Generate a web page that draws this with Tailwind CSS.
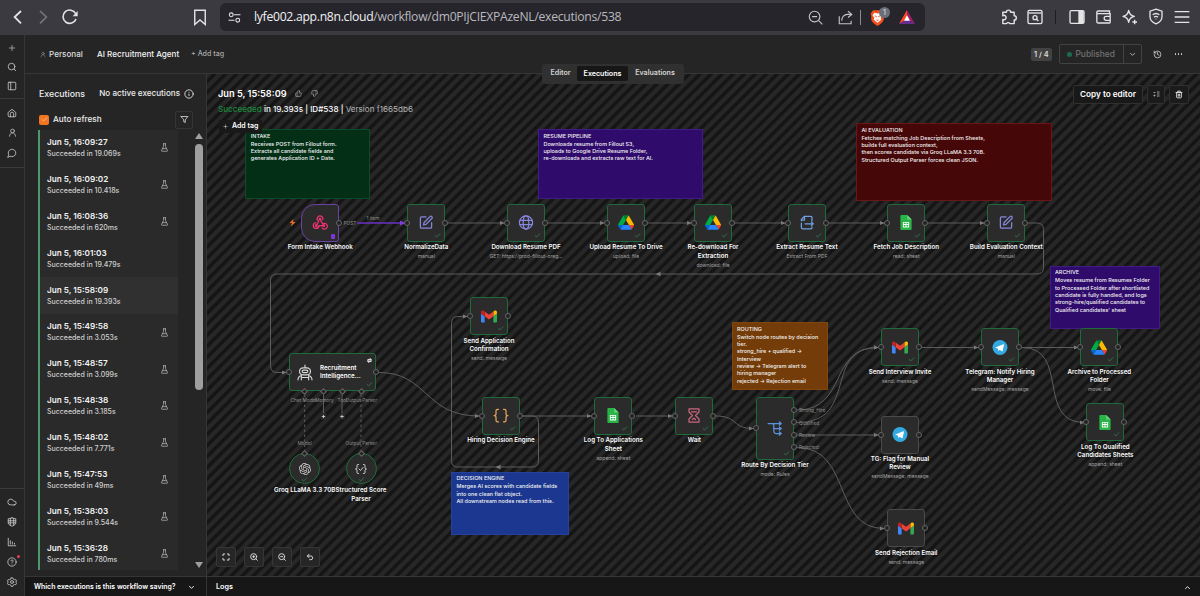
<!DOCTYPE html>
<html lang="en">
	<head>
		<meta charset="UTF-8" />
		<meta name="viewport" content="width=device-width, initial-scale=1.0" />
		<script src="https://cdn.jsdelivr.net/npm/@tailwindcss/browser@4"></script>
		<title>AI Recruitment Agent - n8n</title>
	</head>
	<body
		class="h-[596px] w-[1200px] overflow-hidden bg-[#252525] font-['Inter','Liberation_Sans',sans-serif] text-white flex flex-col [&_use]:fill-none [&_use]:stroke-current [&_use]:stroke-2 [&_use]:[stroke-linecap:round] [&_use]:[stroke-linejoin:round]"
	>
		<!-- icon sprite -->
		<svg class="hidden" xmlns="http://www.w3.org/2000/svg">
			<symbol id="plus" viewBox="0 0 24 24"><path d="M4 12h16M12 4v16" /></symbol>
			<symbol id="search" viewBox="0 0 24 24"><circle cx="11" cy="11" r="8" /><path d="m21 21-4-4" /></symbol>
			<symbol id="panel" viewBox="0 0 24 24"><rect x="3" y="3" width="18" height="18" rx="2" /><path d="M9 3v18" /></symbol>
			<symbol id="home" viewBox="0 0 24 24"><path d="M3 10.500 12 3l9 7.500V19a2 2 0 0 1-2 2H5a2 2 0 0 1-2-2zM8 21v-7a4 4 0 0 1 8 0v7" /></symbol>
			<symbol id="user" viewBox="0 0 24 24"><circle cx="12" cy="8" r="5" /><path d="M4 22c0-5 3-9 8-9s8 4 8 9" /></symbol>
			<symbol id="chat" viewBox="0 0 24 24"><path d="M7.900 20A9 9 0 1 0 4 16.100L2 22Z" /></symbol>
			<symbol id="cloud" viewBox="0 0 24 24"><path d="M17.500 19H9a7 7 0 1 1 6.700-9h1.800a4.500 4.500 0 1 1 0 9Z" /></symbol>
			<symbol id="box" viewBox="0 0 24 24"><path d="M12 2c4 2 6 2 9 2v9c0 5-4 7-9 9-5-2-9-4-9-9V4c3 0 5 0 9-2zM3 9h18M8 3v17M16 3v17M3 14h18" /></symbol>
			<symbol id="chart" viewBox="0 0 24 24"><path d="M3 3v18h18M8 17V9M13 17v-5M18 17v-2" /></symbol>
			<symbol id="help" viewBox="0 0 24 24"><circle cx="12" cy="12" r="10" /><path d="M9.100 9a3 3 0 0 1 5.800 1c0 2-3 3-3 3M12 17h.01" /></symbol>
			<symbol id="gear" viewBox="0 0 24 24"><path d="M10 2h4l1 3 3 1.500 3-.5 2 3.500-2 2.500 2 3-2 3.500-3-.5-3 1.500-1 3h-4l-1-3-3-1.500-3 .5L1 15l2-3-2-2.500L3 6l3 .5L9 5z" /><circle cx="12" cy="12" r="3.500" /></symbol>
			<symbol id="info" viewBox="0 0 24 24"><circle cx="12" cy="12" r="10" /><path d="M12 16v-4M12 8h.01" /></symbol>
			<symbol id="filter" viewBox="0 0 24 24"><path d="M3 4h18l-7 9v7l-4-2v-5z" /></symbol>
			<symbol id="flask" viewBox="0 0 24 24"><path d="M9 2h6M9.500 2v7L4 20a1.500 1.500 0 0 0 1.500 2h13a1.500 1.500 0 0 0 1.500-2L14.500 9V2M7 15h10" /></symbol>
			<symbol id="down" viewBox="0 0 24 24"><path stroke-width="3" d="m5 8 7 7 7-7" /></symbol>
			<symbol id="check" viewBox="0 0 24 24"><path d="M20 6 9 17l-5-5" /></symbol>
			<symbol id="thumb" viewBox="0 0 24 24"><path d="M7 10v12M15 5.900 14 10h6a2 2 0 0 1 2 2.500l-2.300 8a2 2 0 0 1-2 1.500H4a2 2 0 0 1-2-2v-8a2 2 0 0 1 2-2h3l3.500-8A3 3 0 0 1 15 6Z" /></symbol>
			<symbol id="history" viewBox="0 0 24 24"><path d="M3 12a9 9 0 1 0 9-9 9.700 9.700 0 0 0-6.700 2.700L3 8M3 3v5h5M12 7v5l4 2" /></symbol>
			<symbol id="trash" viewBox="0 0 24 24"><path stroke-width="3" d="M3 6h18M19 6v14a2 2 0 0 1-2 2H7a2 2 0 0 1-2-2V6M8 6V2h8v4M10 11v6M14 11v6" /></symbol>
			<symbol id="fit" viewBox="0 0 24 24"><path stroke-width="3" d="M8 3H3v5M21 8V3h-5M3 16v5h5M16 21h5v-5" /></symbol>
			<symbol id="zoomin" viewBox="0 0 24 24"><g stroke-width="3"><circle cx="11" cy="11" r="9" /><path d="m22 22-4-4M11 8v6M8 11h6" /></g></symbol>
			<symbol id="zoomout" viewBox="0 0 24 24"><g stroke-width="3"><circle cx="11" cy="11" r="9" /><path d="m22 22-4-4M8 11h6" /></g></symbol>
			<symbol id="undo" viewBox="0 0 24 24"><path stroke-width="3" d="M9 14 4 9l5-5M4 9h10.500a5.500 5.500 0 0 1 0 11H11" /></symbol>
			<symbol id="pen" viewBox="0 0 24 24"><path d="M12 3H5a2 2 0 0 0-2 2v14a2 2 0 0 0 2 2h14a2 2 0 0 0 2-2v-7M18.400 2.600a2.100 2.100 0 0 1 3 3L12 15l-4 1 1-4z" /></symbol>
			<symbol id="globe" viewBox="0 0 24 24"><circle cx="12" cy="12" r="10.500" /><ellipse cx="12" cy="12" rx="4.500" ry="10.500" /><path d="M2.500 8.500h19M2.500 15.500h19" /></symbol>
			<symbol id="extract" viewBox="0 0 24 24"><path d="M3 9V7l5-5h10a2 2 0 0 1 2 2v5M3 8h5V2M3 13v7a2 2 0 0 0 2 2h13a2 2 0 0 0 2-2v-1M9 14h13M19 11l3 3-3 3" /></symbol>
			<symbol id="hook" viewBox="0 0 24 24"><g fill="currentColor"><circle cx="12" cy="6.500" r="1.300" /><circle cx="6" cy="17" r="1.300" /><circle cx="18" cy="17" r="1.300" /></g><path d="m12 7 4.500 7.500a4.500 4.500 0 1 1-1 6M18 17H10.300a4.500 4.500 0 1 1-4.800-4.600M6 17l4-7a4.500 4.500 0 1 1 6.300-2.500" /></symbol>
			<symbol id="braces" viewBox="0 0 24 24"><path d="M8 2H6.500a2.500 2.500 0 0 0-2.500 2.500V9a3 3 0 0 1-3 3 3 3 0 0 1 3 3v4.500A2.500 2.500 0 0 0 6.500 22H8M16 2h1.500A2.500 2.500 0 0 1 20 4.500V9a3 3 0 0 0 3 3 3 3 0 0 0-3 3v4.500a2.500 2.500 0 0 1-2.500 2.500H16" /></symbol>
			<symbol id="parser" viewBox="0 0 24 24"><path d="M7 3H6a2 2 0 0 0-2 2v4a3 3 0 0 1-3 3 3 3 0 0 1 3 3v4a2 2 0 0 0 2 2h1M17 3h1a2 2 0 0 1 2 2v4a3 3 0 0 0 3 3 3 3 0 0 0-3 3v4a2 2 0 0 1-2 2h-1M8 12l3 3 5-6" /></symbol>
			<symbol id="hourglass" viewBox="0 0 24 24"><path d="M4 1.500h16v5L14.500 12l5.500 5.500v5H4v-5L9.500 12 4 6.500zM8 6h8M9.500 18.500l2.500-2 2.500 2" /></symbol>
			<symbol id="route" viewBox="0 0 24 24"><path d="M1 4h21M19 1.500 22 4l-3 2.500M7 4c4 0 3 3 3 8s0 8 4 8h8M10 12h12M19 9.500l3 2.500-3 2.500M19 17.500l3 2.500-3 2.500" /></symbol>
			<symbol id="robot" viewBox="0 0 24 24"><path stroke-width="1.700" d="M12 1v4M9 5h6a5 5 0 0 1 0 10.500H9A5 5 0 0 1 9 5zM9.500 8.500h5a1.800 1.800 0 0 1 0 3.600h-5a1.800 1.800 0 0 1 0-3.600zM1.500 23c0-4 2-5.500 5-6.500M22.500 23c0-4-2-5.500-5-6.500M6.500 17v6M17.500 17v6M6.500 19.500h11" /></symbol>
			<symbol id="loop" viewBox="0 0 24 24"><path stroke-width="4" d="M4 13V7h14M15 2l5 5-5 5M20 11v6H6M9 12l-5 5 5 5" /></symbol>
			<symbol id="drive" viewBox="0 0 87.300 78" stroke="none">
				<path fill="#0066da" d="m6.600 66.850 3.850 6.650c.8 1.400 1.950 2.500 3.300 3.300L27.500 53H0c0 1.550.4 3.100 1.200 4.500z" />
				<path fill="#00ac47" d="M43.650 25 29.900 1.200c-1.350.8-2.500 1.900-3.300 3.300l-25.400 44A9.060 9.060 0 0 0 0 53h27.500z" />
				<path fill="#ea4335" d="M73.550 76.800c1.350-.8 2.500-1.900 3.300-3.300l1.600-2.750L86.100 57.500c.8-1.400 1.200-2.950 1.200-4.500H59.800l5.850 11.500z" />
				<path fill="#00832d" d="M43.650 25 57.400 1.200C56.050.4 54.500 0 52.900 0H34.400c-1.600 0-3.150.45-4.500 1.200z" />
				<path fill="#2684fc" d="M59.800 53H27.500L13.750 76.800c1.350.8 2.900 1.200 4.500 1.200h50.800c1.600 0 3.150-.45 4.500-1.200z" />
				<path fill="#ffba00" d="m73.400 26.500-12.700-22c-.8-1.400-1.950-2.500-3.300-3.300L43.650 25 59.800 53h27.450c0-1.550-.4-3.100-1.200-4.500z" />
			</symbol>
			<symbol id="gmail" viewBox="52 42 88 66" stroke="none">
				<path fill="#4285f4" d="M58 108h14V74L52 59v43c0 3.320 2.690 6 6 6" />
				<path fill="#34a853" d="M120 108h14c3.320 0 6-2.690 6-6V59l-20 15" />
				<path fill="#fbbc04" d="M120 48v26l20-15v-8c0-7.420-8.470-11.650-14.400-7.200" />
				<path fill="#ea4335" d="M72 74V48l24 18 24-18v26L96 92" />
				<path fill="#c5221f" d="M52 51v8l20 15V48l-5.600-4.200c-5.940-4.450-14.400-.22-14.400 7.200" />
			</symbol>
			<symbol id="sheets" viewBox="0 0 24 24" stroke="none">
				<path fill="#28b446" d="M3 1.500A1.500 1.500 0 0 1 4.500 0H14l7 7v15.500a1.500 1.500 0 0 1-1.500 1.500h-15A1.500 1.500 0 0 1 3 22.500z" />
				<path fill="#6ace7c" d="M14 0l7 7h-7z" />
				<path fill="#fff" fill-rule="evenodd" d="M7 11h10v9H7zm1.500 1.500v2h2.800v-2zm4.200 0v2h2.800v-2zm-4.200 3.500v2.500h2.800V16zm4.200 0v2.500h2.800V16z" />
			</symbol>
			<symbol id="telegram" viewBox="0 0 24 24" stroke="none">
				<circle cx="12" cy="12" r="12" fill="#33a9e0" />
				<path fill="#fff" d="M4.500 11.900 17.300 6.800c.7-.3 1.200.1 1 1l-2.100 9.800c-.2.8-.7.900-1.300.5l-3.300-2.400-1.600 1.500c-.4.4-.6.3-.7-.3l-.8-3.200-3.900-1.200c-.6-.2-.6-.4-.1-.6z" />
			</symbol>
			<symbol id="openai" viewBox="0 0 24 24" stroke="none">
				<path fill="currentColor" d="M22.282 9.821a5.985 5.985 0 0 0-.516-4.910 6.046 6.046 0 0 0-6.510-2.900A6.065 6.065 0 0 0 4.981 4.182a5.985 5.985 0 0 0-3.998 2.900 6.046 6.046 0 0 0 .743 7.097 5.980 5.980 0 0 0 .511 4.910 6.051 6.051 0 0 0 6.515 2.900A5.985 5.985 0 0 0 13.260 24a6.056 6.056 0 0 0 5.772-4.206 5.989 5.989 0 0 0 3.998-2.900 6.056 6.056 0 0 0-.748-7.073zm-9.022 12.608a4.476 4.476 0 0 1-2.876-1.041l.142-.080 4.778-2.758a.795.795 0 0 0 .393-.681v-6.737l2.020 1.169a.071.071 0 0 1 .038.052v5.583a4.504 4.504 0 0 1-4.495 4.494zm-9.661-4.125a4.471 4.471 0 0 1-.535-3.014l.142.085 4.783 2.758a.771.771 0 0 0 .781 0l5.843-3.369v2.332a.080.080 0 0 1-.033.062L9.740 19.950a4.499 4.499 0 0 1-6.141-1.646zM2.341 7.896a4.485 4.485 0 0 1 2.366-1.973V11.600a.766.766 0 0 0 .388.677l5.814 3.354-2.020 1.169a.076.076 0 0 1-.071 0l-4.830-2.787A4.504 4.504 0 0 1 2.341 7.872zm16.596 3.856L13.104 8.364 15.119 7.200a.076.076 0 0 1 .071 0l4.830 2.791a4.494 4.494 0 0 1-.677 8.104v-5.677a.790.790 0 0 0-.407-.667zm2.011-3.023-.142-.085-4.774-2.782a.776.776 0 0 0-.785 0L9.409 9.230V6.897a.066.066 0 0 1 .028-.062l4.830-2.787a4.499 4.499 0 0 1 6.680 4.660zM8.307 12.863l-2.020-1.164a.080.080 0 0 1-.038-.057V6.074a4.499 4.499 0 0 1 7.376-3.454l-.142.081L8.704 5.459a.795.795 0 0 0-.393.681zm1.098-2.365 2.602-1.500 2.607 1.500v2.999l-2.597 1.500-2.607-1.500Z" />
			</symbol>
		</svg>

		<!-- browser bar -->
		<div class="h-[34.500px] shrink-0 bg-[#3b3a40] flex items-start text-[#e4e4e6]">
			<div class="w-[220px] h-[33px] flex items-center">
				<svg class="ml-[9px] w-[18px] h-[18px]" viewBox="0 0 24 24" fill="none" stroke="currentColor" stroke-width="2.400"><path d="M16 4 7.500 12l8.500 8.500" /></svg>
				<svg class="ml-[7px] w-[18px] h-[18px] text-[#77767b]" viewBox="0 0 24 24" fill="none" stroke="currentColor" stroke-width="2.200"><path d="m8 4 8.500 8L8 20.500" /></svg>
				<svg class="ml-[10px] w-4 h-4" viewBox="0 0 24 24" fill="none" stroke="currentColor" stroke-width="2.400"><path d="M21 15A10 10 0 1 1 20.500 7" /><path d="M23.500 3v8H16z" fill="currentColor" stroke="none" /></svg>
				<svg class="ml-[113px] w-[18px] h-[18px]" viewBox="0 0 24 24" fill="none" stroke="currentColor" stroke-width="1.900"><path d="M5 3h14v19l-7-6-7 6z" /></svg>
			</div>
			<div class="mt-[3px] w-[705px] h-7 rounded-[6px] bg-[#26252b] flex items-center">
				<svg class="ml-[8px] w-[13px] h-[13px]" viewBox="0 0 24 24" fill="none" stroke="currentColor" stroke-width="2"><circle cx="6" cy="7" r="3.500" /><path d="M11 7h12M1 17h11" /><circle cx="18" cy="17" r="3.500" /></svg>
				<span class="ml-[13px] w-[540px] whitespace-nowrap font-['Open_Sans','Noto_Sans',sans-serif] text-[12.200px] tracking-[-.29px] text-[#f1f1f3]">lyfe002.app.n8n.cloud<span class="text-[#b9b8bf]">/workflow/dm0PIjCIEXPAzeNL/executions/538</span></span>
				<svg class="ml-[14px] w-[15px] h-[15px]" viewBox="0 0 24 24" fill="none" stroke="#c4c4c8" stroke-width="1.800"><circle cx="10.500" cy="10.500" r="8.500" /><path d="m17 17 6 6M6.500 10.500h8" /></svg>
				<svg class="ml-[15px] w-[15px] h-[15px]" viewBox="0 0 24 24" fill="none" stroke="#c4c4c8" stroke-width="1.800"><path d="M2 10v12h19v-5M6 17c0-6 4-10 9-10h6M16 2l6 5-6 5" /></svg>
				<div class="ml-[7px] h-[15px] w-px bg-[#8c8b92]"></div>
				<div class="relative ml-[9px] w-[15px] h-[17px]">
					<svg class="w-[15px] h-[17px]" viewBox="0 0 24 27"><path fill="#f4511e" d="M5 2h14l4 5-1 4 0 6c-1 4-6 8-10 10-4-2-9-6-10-10L2 11 1 7z" /><path fill="#fff" d="m12 7 5-1 3 4-3 4 1 3-6 5-6-5 1-3-3-4 3-4z" /><path fill="#f4511e" d="m7 10 4 1.500-1 2zM17 10l-4 1.500 1 2zM9 17h6l-3 2z" /></svg>
					<span class="absolute -top-[2px] left-[9px] h-[11px] w-[11px] rounded-full bg-[#6b7078] text-center text-[7px] leading-[11px]">1</span>
				</div>
				<svg class="ml-[14px] w-[16px] h-[14px]" viewBox="0 0 24 21"><path fill="#ff4724" d="M12 0 0 21l12-7z" /><path fill="#9e1f63" d="m12 0 12 21-12-7z" /><path fill="#662d91" d="M0 21h24l-12-8z" /><path fill="#fff" d="m12 8 4.500 8h-9z" /></svg>
			</div>
			<div class="flex h-[33px] items-center">
				<svg class="ml-[75px] w-[17px] h-[17px]" viewBox="0 0 24 24" fill="none" stroke="currentColor" stroke-width="2" stroke-linejoin="round"><path d="M4 6h5a3 3 0 1 1 6 0h5v5a3 3 0 1 1 0 6v5h-6a3 3 0 0 0-5 0H4v-6a3 3 0 1 0 0-5z" /></svg>
				<svg class="ml-[10px] w-[16px] h-[16px]" viewBox="0 0 24 24" fill="none" stroke="currentColor" stroke-width="2"><rect x="1.500" y="2" width="21" height="20" rx="2" /><path d="M2 6h20" /><circle cx="12" cy="13" r="3" /><path d="m14 15 3 3" /></svg>
				<div class="ml-[12px] h-[14px] w-px bg-[#1d1d20]"></div>
				<svg class="ml-[13px] w-[16px] h-[16px]" viewBox="0 0 24 24"><rect x="1.500" y="2.500" width="21" height="19" rx="2" fill="none" stroke="currentColor" stroke-width="2" /><path d="M14 3h8v18h-8z" fill="currentColor" /></svg>
				<svg class="ml-[10px] w-[17px] h-[16px]" viewBox="0 0 24 24" fill="none" stroke="currentColor" stroke-width="2"><path d="M21 7V3H4a2 2 0 0 0-2 2v14a2 2 0 0 0 2 2h17a1 1 0 0 0 1-1V7H3M22 11h-6a3 3 0 0 0 0 6h6" /></svg>
				<svg class="ml-[10px] w-[16px] h-[16px]" viewBox="0 0 24 24" fill="none" stroke="currentColor" stroke-width="2" stroke-linejoin="round"><path d="M10 2c1 6 3 8 8.500 9-5.500 1-7.500 3-8.500 9-1-6-3-8-8.500-9C7 10 9 8 10 2zM19 16v7M15.500 19.500h7" /></svg>
				<svg class="ml-[10px] w-[16px] h-[17px]" viewBox="0 0 24 24" fill="none" stroke="currentColor" stroke-width="2"><path d="m12 1 9 3v8c0 5-4 9-9 11-5-2-9-6-9-11V4zM7 9.500c3-2.500 7-2.500 10 0M9 13c2-1.500 4-1.500 6 0M11.500 16h1" /></svg>
				<svg class="ml-[10px] w-[16px] h-[16px]" viewBox="0 0 24 24" stroke="currentColor" stroke-width="2"><path d="M1 4h22M1 12h22M1 20h22" /></svg>
			</div>
		</div>

		<div class="flex min-h-0 grow">
			<!-- main rail -->
			<div class="w-[25px] shrink-0 border-r border-[#363636] flex flex-col items-center text-[#c9c9c9]">
				<svg class="mt-[9px] w-2 h-2"><use href="#plus" /></svg>
				<svg class="mt-[10px] w-[10px] h-[10px]"><use href="#search" /></svg>
				<svg class="mt-[9px] w-[10px] h-[10px]"><use href="#panel" /></svg>
				<div class="mt-[7px] h-px w-full bg-[#3a3a3a]"></div>
				<svg class="mt-[9px] w-[10px] h-[10px]"><use href="#home" /></svg>
				<svg class="mt-[10px] w-[9px] h-[9px]"><use href="#user" /></svg>
				<svg class="mt-[11px] w-[10px] h-[10px]"><use href="#chat" /></svg>
				<div class="mt-[9px] h-px w-full bg-[#3a3a3a]"></div>
				<div class="mt-auto h-px w-full bg-[#3a3a3a]"></div>
				<svg class="mt-[8px] w-[10px] h-[10px]"><use href="#cloud" /></svg>
				<svg class="mt-[10px] w-[10px] h-[10px]"><use href="#box" /></svg>
				<svg class="mt-[10px] w-[10px] h-[10px]"><use href="#chart" /></svg>
				<div class="relative mt-[10px] h-[10px]">
					<svg class="w-[10px] h-[10px]"><use href="#help" /></svg>
					<span class="absolute -top-[2px] left-[10px] h-[3px] w-[3px] rounded-full bg-[#e0405a]"></span>
				</div>
				<svg class="mt-[10px] mb-[9px] w-[10px] h-[10px]"><use href="#gear" /></svg>
			</div>

			<div class="relative flex min-w-0 grow flex-col">
				<!-- workflow header -->
				<div class="h-[39px] shrink-0 border-b border-[#363636] pt-[1px] flex items-center text-[8.100px] font-medium text-[#dedede]">
					<svg class="ml-[15px] w-[6px] h-[7px] text-[#999]"><use href="#user" /></svg>
					<span class="ml-[3px] w-[33px]">Personal</span>
					<span class="ml-[15px] w-[83px] whitespace-nowrap text-[#f3f3f3]">AI Recruitment Agent</span>
					<span class="ml-[11px] text-[7.100px] text-[#a8a8a8]">+ Add tag</span>
					<span class="ml-auto rounded-[2px] bg-[#424242] px-[3px] py-[2px] text-[7.300px] leading-[9px] font-semibold">1 / 4</span>
					<div class="ml-[7px] flex h-5 w-[83px] items-center rounded-[2px] border border-[#424242] text-[8.400px] text-[#727272]">
						<span class="ml-[7px] h-[5px] w-[5px] rounded-full bg-[#1c6b50]"></span>
						<span class="ml-[4px]">Published</span>
						<span class="ml-auto flex h-full w-[18px] items-center justify-center border-l border-[#424242] text-[#bbb]"><svg class="w-[7px] h-[7px]"><use href="#down" /></svg></span>
					</div>
					<svg class="ml-[11px] w-[9px] h-[9px]"><use href="#history" /></svg>
					<span class="ml-[13px] mr-[18px] flex gap-[1.500px]"><i class="h-[1.500px] w-[1.500px] rounded-full bg-[#ddd]"></i><i class="h-[1.500px] w-[1.500px] rounded-full bg-[#ddd]"></i><i class="h-[1.500px] w-[1.500px] rounded-full bg-[#ddd]"></i></span>
				</div>

				<div class="flex min-h-0 grow">
					<!-- executions list -->
					<div class="flex w-[182px] shrink-0 flex-col border-r border-[#363636]">
						<div class="mt-[14px] flex h-3 items-center px-[14px] text-[8.800px] font-medium text-[#ececec]">
							<span>Executions</span>
							<span class="ml-auto text-[8.100px]">No active executions</span>
							<svg class="ml-[4px] -mr-[2px] w-[10px] h-[10px]"><use href="#info" /></svg>
						</div>
						<div class="mt-[11px] flex h-[18px] items-center px-[14px] text-[8.200px] font-medium text-[#ececec]">
							<span class="flex h-[10px] w-[10px] items-center justify-center rounded-[2px] bg-[#f37521]"><svg class="w-[7px] h-[7px]"><use href="#check" /></svg></span>
							<span class="ml-[4px]">Auto refresh</span>
							<span class="ml-auto -mr-[1px] flex h-[18px] w-[18px] items-center justify-center rounded-[2px] border border-[#353535]"><svg class="w-[9px] h-[9px]"><use href="#filter" /></svg></span>
						</div>
						<div class="mt-[1px] flex min-h-0 grow">
							<div id="executions" class="ml-[13px] mb-[6px] w-[140px] overflow-hidden border-l-2 border-[#4c9a6c] bg-[#2a2a2a]"></div>
							<div class="ml-auto mr-[2px] mb-[3px] flex w-[10px] flex-col items-center pt-[3px]">
								<div class="border-x-4 border-b-[6px] border-x-transparent border-b-[#9f9f9f]"></div>
								<div class="mt-[5px] h-[246px] w-2 rounded-full bg-[#9f9f9f]"></div>
								<div class="mt-auto mb-[5px] border-x-4 border-t-[6px] border-x-transparent border-t-[#9f9f9f]"></div>
							</div>
						</div>
						<div class="flex h-[20px] shrink-0 items-center border-t border-[#363636] bg-[#171717] pt-[1px] pl-[9px] text-[6.930px] font-semibold">
							<span class="whitespace-nowrap">Which executions is this workflow saving?</span>
							<svg class="ml-auto mr-[11px] w-[7px] h-[7px]"><use href="#down" /></svg>
						</div>
					</div>

					<div class="flex min-w-0 grow flex-col">
						<!-- canvas -->
						<div class="relative min-h-0 grow overflow-hidden bg-[repeating-linear-gradient(135deg,#272727_0px,#272727_3px,#151515_4.200px,#151515_6.600px,#272727_7.800px)]">
							<div class="absolute top-[14px] left-[11px] flex flex-col items-start text-[8.100px] font-medium">
								<div class="flex h-3 items-center text-[9.200px] font-semibold">
									<span>Jun 5, 15:58:09</span>
									<svg class="ml-[8px] w-[7px] h-[7px] text-[#aaa]"><use href="#thumb" /></svg>
									<svg class="ml-[9px] w-[7px] h-[7px] rotate-180 text-[#aaa]"><use href="#thumb" /></svg>
								</div>
								<div class="mt-[4px] h-[11px] whitespace-nowrap leading-[11px]"><span class="text-[#1d8a3f]">Succeeded</span> in 19.393s | ID#538 | <span class="font-normal text-[#b4b4b4]">Version f1665db6</span></div>
								<div class="relative z-20 mt-[5px] ml-[1px] flex h-[13px] items-center bg-[#191919] px-1 text-[7px] font-semibold"><svg class="mr-[4px] w-[5px] h-[5px]"><use href="#plus" /></svg>Add tag</div>
							</div>
							<div id="notes"></div>
							<svg class="absolute inset-0 h-full w-full" viewBox="207 73.500 993 502.500" fill="none" stroke="#5c5c5c" stroke-width="1">
								<defs>
									<marker id="arrow" markerUnits="userSpaceOnUse" markerWidth="6" markerHeight="6" refX="4.500" refY="3" orient="auto"><path d="M0 .8 5 3 0 5.200z" fill="#7a7a7a" stroke="none" /></marker>
									<marker id="arrowp" markerUnits="userSpaceOnUse" markerWidth="6" markerHeight="6" refX="4.500" refY="3" orient="auto"><path d="M0 .5 5 3 0 5.500z" fill="#7f3fe0" stroke="none" /></marker>
								</defs>
								<path d="M357 222.500H404.500" stroke="#6932c4" stroke-width="1.300" marker-end="url(#arrowp)" />
								<g marker-end="url(#arrow)">
									<path d="M448 222.500H504" />
									<path d="M548 222.500H604" />
									<path d="M648 222.500H691" />
									<path d="M735 222.500H785" />
									<path d="M829 222.500H884" />
									<path d="M928 222.500H984" />
									<path d="M1028 222.500h9q6.500 0 6.500 6.500v38q0 6.500-6.500 6.500H656" />
									<path d="M656 273.500H277q-6.500 0-6.500 6.500v85q0 7 6.500 7H286" />
									<path d="M379 372C428 372 424 415.500 479 415.500" />
									<path d="M523 415.500H591" />
									<path d="M523 415.500h9q6.500 0 6.500 6.500v38q0 6.500-6.500 6.500H496" />
									<path d="M496 466.500H458q-6.500 0-6.500-6.500V323q0-7 6.500-7H467" />
									<path d="M636 415.500H672" />
									<path d="M716 415.500C738 415.500 732 428 753 428" />
									<path d="M797 409.500C848 409.500 828 347 878 347" />
									<path d="M797 422C860 422 822 347 878 347" />
									<path d="M797 434.500H878" />
									<path d="M797 447C852 447 832 528 884 528" />
									<path d="M922 347H978" />
									<path d="M1022 347H1078" />
									<path d="M1022 347C1070 347 1036 422 1084 422" />
								</g>
								<path d="M304.700 394V450M361 394V450" stroke-dasharray="2.500 2.500" />
								<path d="M323.500 394V413M342 394V413" />
								<g fill="#292929" stroke="none"><rect x="320.500" y="413" width="6" height="6" rx="1" /><rect x="339" y="413" width="6" height="6" rx="1" /></g>
								<path d="M323.500 414.300v3.400M321.800 416h3.400M342 414.300v3.400M340.300 416h3.400" stroke="#ddd" stroke-width=".8" />
								<path d="M293.500 218.500l-4 4h2.500l-1 3.500 4.500-4.500h-2.500z" fill="#ee6a1c" stroke="none" />
							</svg>
							<div id="nodes"></div>
							<div class="absolute bottom-[9px] left-[9px] flex gap-[8px] text-[#d6d6d6]">
								<span class="flex h-5 w-5 items-center justify-center rounded-[2px] border border-[#363636] bg-[#262626]"><svg class="w-2 h-2"><use href="#fit" /></svg></span>
								<span class="flex h-5 w-5 items-center justify-center rounded-[2px] border border-[#363636] bg-[#262626]"><svg class="w-2 h-2"><use href="#zoomin" /></svg></span>
								<span class="flex h-5 w-5 items-center justify-center rounded-[2px] border border-[#363636] bg-[#262626]"><svg class="w-2 h-2"><use href="#zoomout" /></svg></span>
								<span class="flex h-5 w-5 items-center justify-center rounded-[2px] border border-[#363636] bg-[#262626]"><svg class="w-2 h-2"><use href="#undo" /></svg></span>
							</div>
							<div class="absolute top-[11px] right-[11px] flex gap-[4px] text-[#d6d6d6]">
								<span class="flex h-[19px] w-[70px] items-center justify-center rounded-[2px] border border-[#303030] bg-[#191919] text-[8.200px] font-semibold text-white">Copy to editor</span>
								<span class="flex h-[19px] w-[18px] items-center justify-center gap-[1px] rounded-[2px] border border-[#303030] bg-[#1b1b1b]"><svg class="w-[7px] h-[6px]" viewBox="0 0 14 12" stroke="#aaa" stroke-width="1.800"><path d="M1 3h4M1 9h4M3 7v4M8 2h5M8 6h5M8 10h5" /></svg></span>
								<span class="flex h-[19px] w-[20px] items-center justify-center rounded-[2px] border border-[#303030] bg-[#1b1b1b]"><svg class="w-2 h-[9px]"><use href="#trash" /></svg></span>
							</div>
						</div>
						<!-- logs -->
						<div class="flex h-[20px] shrink-0 items-center border-t border-[#363636] bg-[#171717] px-[9px] pt-[1px] text-[7.200px] font-semibold">
							Logs
							<svg class="ml-auto w-[7px] h-[7px] rotate-180"><use href="#down" /></svg>
						</div>
					</div>
				</div>

				<div class="absolute top-[29px] left-[517px] flex h-[20px] w-[142px] items-center rounded-[3px] bg-[#303030] px-[2px] text-[7.100px] font-semibold text-[#d5d5d5]">
					<span class="w-[33px] text-center">Editor</span>
					<span class="h-[15px] w-[51px] rounded-[2px] bg-[#171717] text-center leading-[15px] text-white">Executions</span>
					<span class="grow text-center">Evaluations</span>
				</div>
			</div>
		</div>

		<script>
			// [time, duration, has test flask]
			const executions = [
				['16:09:27', '19.069s', 1], ['16:09:02', '10.418s', 1], ['16:08:36', '620ms', 1], ['16:01:03', '19.479s', 0],
				['15:58:09', '19.393s', 0], ['15:49:58', '3.053s', 1], ['15:48:57', '3.099s', 1], ['15:48:38', '3.185s', 1],
				['15:48:02', '7.771s', 1], ['15:47:53', '49ms', 1], ['15:38:03', '9.544s', 1], ['15:36:28', '780ms', 1],
			]
			document.getElementById('executions').innerHTML = executions.map(([time, took, flask], i) => `
				<div class="flex h-[36.870px] items-center justify-between pl-[7px] pr-[9px] ${i === 4 ? 'bg-[#303030]' : ''}">
					<div class="pt-[.5px]">
						<div class="text-[8.200px] leading-[11px] font-semibold text-[#f2f2f2]">Jun 5, ${time}</div>
						<div class="text-[7px] leading-[11px] font-medium text-[#cfcfcf]">Succeeded in ${took}</div>
					</div>
					${flask ? '<svg class="w-[9px] h-[9px] text-[#b5b5b5]"><use href="#flask" /></svg>' : ''}
				</div>`).join('')

			// canvas origin in window coordinates
			const ox = 207, oy = 73.3
			const at = (x, y) => `left:${x - ox}px;top:${y - oy}px`

			const notes = [
				[245.3, 129, 125, 70, 'bg-[#032f17] border-[#0d4a28]', 'INTAKE', 'Receives POST from Fillout form.\nExtracts all candidate fields and\ngenerates Application ID + Date.'],
				[538, 129, 165, 70, 'bg-[#2f0b6b] border-[#421a86]', 'RESUME PIPELINE', 'Downloads resume from Fillout S3,\nuploads to Google Drive Resume Folder,\nre-downloads and extracts raw text for AI.'],
				[856, 123, 196, 78, 'bg-[#460709] border-[#6a1518]', 'AI EVALUATION', 'Fetches matching Job Description from Sheets,\nbuilds full evaluation context,\nthen scores candidate via Groq LLaMA 3.3 70B.\nStructured Output Parser forces clean JSON.'],
				[1049.5, 265.5, 110, 63.5, 'bg-[#2f0b6b] border-[#421a86]', 'ARCHIVE', "Moves resume from Resumes Folder\nto Processed Folder after shortlisted\ncandidate is fully handled, and logs\nstrong-hire/qualified candidates to\nQualified candidates' sheet"],
				[731.5, 322, 96, 68, 'bg-[#733c09] border-[#7f460f]', 'ROUTING', 'Switch node routes by decision\ntier.\nstrong_hire + qualified →\nInterview\nreview → Telegram alert to\nhiring manager\nrejected → Rejection email'],
				[451, 471.5, 117.5, 63, 'bg-[#1b378f] border-[#24429c]', 'DECISION ENGINE', 'Merges AI scores with candidate fields\ninto one clean flat object.\nAll downstream nodes read from this.'],
			]
			document.getElementById('notes').innerHTML = notes.map(([x, y, w, h, tone, title, text]) => `
				<div class="absolute border pt-[2.500px] pl-[4.500px] text-[5.450px] leading-[7.350px] font-medium text-[#f4f4f4] whitespace-pre ${tone}" style="${at(x, y)};width:${w}px;height:${h}px"><div class="mb-[.7px]">${title}</div>${text}</div>`).join('')

			// x, y is the node centre
			const nodes = [
				{ x: 320.3, y: 222.5, icon: 'hook', tint: 'text-[#f0346f]', name: 'Form Intake Webhook', trigger: 1 },
				{ x: 426.3, y: 222.5, icon: 'pen', tint: 'text-[#8787dd]', name: 'NormalizeData', sub: 'manual' },
				{ x: 526, y: 222.5, icon: 'globe', tint: 'text-[#8787dd]', name: 'Download Resume PDF', sub: 'GET: https://prod-fillout-oreg...' },
				{ x: 626, y: 222.5, icon: 'drive', name: 'Upload Resume To Drive', sub: 'upload: file' },
				{ x: 713, y: 222.5, icon: 'drive', name: 'Re-download For\nExtraction', sub: 'download: file' },
				{ x: 807, y: 222.5, icon: 'extract', tint: 'text-[#6f9fe0]', name: 'Extract Resume Text', sub: 'Extract From PDF' },
				{ x: 906.3, y: 222.5, icon: 'sheets', name: 'Fetch Job Description', sub: 'read: sheet' },
				{ x: 1006.3, y: 222.5, icon: 'pen', tint: 'text-[#8787dd]', name: 'Build Evaluation Context', sub: 'manual' },
				{ x: 489, y: 316, icon: 'gmail', name: 'Send Application\nConfirmation', sub: 'send: message' },
				{ x: 501, y: 415.5, icon: 'braces', tint: 'text-[#e8a35c]', name: 'Hiring Decision Engine' },
				{ x: 613.4, y: 415.5, icon: 'sheets', name: 'Log To Applications\nSheet', sub: 'append: sheet' },
				{ x: 694.4, y: 415.5, icon: 'hourglass', tint: 'text-[#c9667f]', name: 'Wait' },
				{ x: 775, y: 428, h: 63, icon: 'route', tint: 'text-[#5a93dd]', name: 'Route By Decision Tier', sub: 'mode: Rules', outs: [409.5, 422, 434.5, 447] },
				{ x: 900, y: 347, icon: 'gmail', name: 'Send Interview Invite', sub: 'send: message' },
				{ x: 1000, y: 347, icon: 'telegram', name: 'Telegram: Notify Hiring\nManager', sub: 'sendMessage: message' },
				{ x: 1099.4, y: 347, icon: 'drive', name: 'Archive to Processed\nFolder', sub: 'move: file' },
				{ x: 1105.4, y: 422, icon: 'sheets', name: 'Log To Qualified\nCandidates Sheets', sub: 'append: sheet' },
				{ x: 900, y: 434.3, icon: 'telegram', name: 'TG: Flag for Manual\nReview', sub: 'sendMessage: message', idle: 1 },
				{ x: 906.3, y: 528, icon: 'gmail', name: 'Send Rejection Email', sub: 'send: message', idle: 1 },
			]
			const port = (x, y) => `<div class="absolute h-[6px] w-[6px] rounded-full border border-[#666] bg-[#222]" style="${at(x - 3, y - 3)}"></div>`
			const diamond = (x, y) => `<div class="absolute h-[5px] w-[5px] rotate-45 border border-[#666] bg-[#222]" style="${at(x - 2.5, y - 2.5)}"></div>`
			const label = (x, y, name, sub) => `
				<div class="absolute w-[120px] text-center" style="${at(x - 60, y)}">
					<div class="text-[6.200px] leading-[8.400px] font-semibold whitespace-pre-line [text-shadow:0_0_2px_#111]">${name}</div>
					${sub ? `<div class="mt-[.5px] text-[5px] leading-[8px] text-[#a4a4a4]">${sub}</div>` : ''}
				</div>`
			const tick = '<svg class="w-[7px] h-[7px] text-[#34a85c]"><use href="#check" /></svg>'
			const tiny = (x, y, text) => `<div class="absolute -translate-y-1/2 text-[4.800px] leading-[6px] whitespace-nowrap text-[#8f8f8f]" style="${at(x, y)}">${text}</div>`

			let html = nodes.map((n) => {
				const h = n.h || 38
				return `
				<div class="absolute flex items-center justify-center border bg-[#2b2b2b] ${n.trigger ? 'rounded-l-[14px] rounded-r-[3px] border-[#6b42a5]' : n.idle ? 'rounded-[3px] border-[#4a4a4a]' : 'rounded-[3px] border-[#1d6b3a]'}" style="${at(n.x - 19, n.y - h / 2)};width:38px;height:${h}px">
					<svg class="w-[16px] h-[15px] ${n.tint || ''}"><use href="#${n.icon}" /></svg>
					<span class="absolute right-[3px] bottom-[2px]">${n.trigger ? '<i class="block h-[5px] w-[4px] rounded-[1px] bg-[#7a35dd]"></i>' : n.idle ? '' : tick}</span>
				</div>
				${n.trigger ? '' : port(n.x - 19, n.y)}
				${(n.outs || [n.y]).map((y) => port(n.x + 19, y)).join('')}
				${label(n.x, n.y + h / 2 + 1.5, n.name, n.sub)}`
			}).join('')

			html += `
				<div class="absolute flex h-[38px] w-[87px] items-center rounded-[3px] border border-[#1d6b3a] bg-[#2b2b2b] pl-[7px]" style="${at(289, 353)}">
					<svg class="w-[16px] h-[17px] text-[#d8d8d8]"><use href="#robot" /></svg>
					<div class="ml-[7px] text-[6.200px] leading-[8px] font-semibold">Recruitment<br />Intelligence...</div>
					<svg class="absolute top-[4px] right-[3px] w-[5px] h-[5px]"><use href="#loop" /></svg>
					<span class="absolute right-[2px] bottom-[2px]">${tick}</span>
				</div>` + port(289, 372) + port(376, 372)
			html += [304.7, 323.5, 342, 361].map((x) => diamond(x, 391)).join('')

			html += [[304.7, 'openai', 'Groq LLaMA 3.3 70B'], [361, 'parser', 'Structured Score\nParser']].map(([x, icon, name]) => `
				<div class="absolute flex h-[31px] w-[31px] items-center justify-center rounded-full border border-[#1d6b3a] bg-[#2b2b2b]" style="${at(x - 15.5, 453.2)}">
					<svg class="w-3 h-3 text-[#cfcfcf]"><use href="#${icon}" /></svg>
					<span class="absolute bottom-0 left-[11px]">${tick}</span>
				</div>${diamond(x, 453)}${label(x, 486, name)}`).join('')

			html += [
				[343.5, 222.5, 'POST'], [366.5, 217.5, '1 item'],
				[290.5, 399.5, 'Chat Model'], [315, 399.5, 'Memory'], [337.5, 399.5, 'Tool'], [345.5, 399.5, 'Output Parser'],
				[297.5, 442.5, 'Model'], [345.5, 442.5, 'Output Parser'],
				[799, 410, 'Strong_Hire'], [799, 422.5, 'Qualified'], [799, 434.5, 'Review'], [799, 447, 'Rejected'],
			].map((l) => tiny(...l)).join('')
			document.getElementById('nodes').innerHTML = html
		</script>
	</body>
</html>
